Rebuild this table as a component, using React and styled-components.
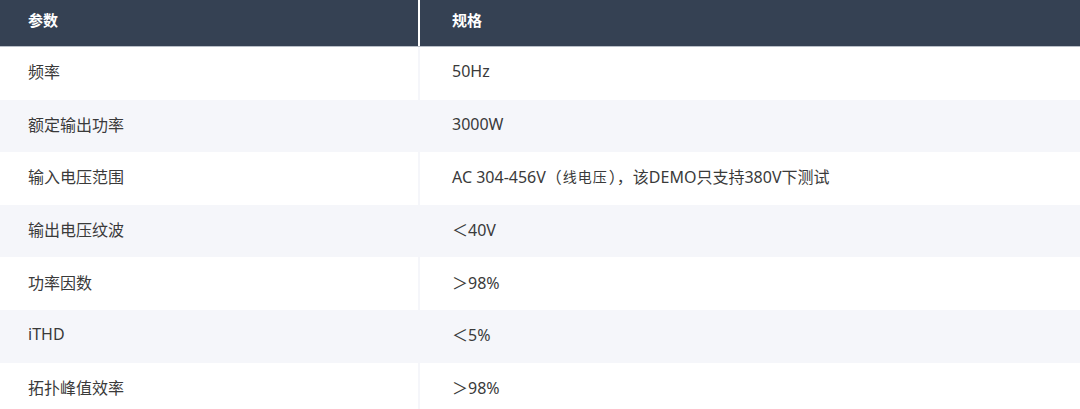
import React from "react";
import styled, { createGlobalStyle } from "styled-components";

const GlobalStyle = createGlobalStyle`
  body {
    margin: 0;
    background: #ffffff;
    font-family: "Noto Sans", "Noto Sans CJK SC", sans-serif;
  }
`;

const Table = styled.div`
  width: 1080px;
  display: flex;
  flex-direction: column;
`;

const HeadRow = styled.div`
  display: grid;
  grid-template-columns: 418px 1fr;
  column-gap: 2px;
  background: #ffffff;
  height: 46px;
  border-bottom: 1px solid #b9bfc8;
`;

const HeadCell = styled.div`
  display: flex;
  align-items: center;
  background: #354153;
  color: #ffffff;
  font-weight: 700;
  font-size: 15px;
  padding-bottom: 7px;
  padding-left: ${(props) => (props.$second ? "32px" : "28px")};
`;

const Row = styled.div`
  display: grid;
  grid-template-columns: 418px 2px 1fr;
  height: 52.6px;
  background: ${(props) => (props.$striped ? "#f5f6fa" : "#ffffff")};
`;

const Divider = styled.div`
  background: #f5f6fa;
`;

const Cell = styled.div`
  display: flex;
  align-items: center;
  color: #3a3a3a;
  font-size: 16px;
  padding-bottom: 4px;
  padding-left: ${(props) => (props.$second ? "32px" : "28px")};
`;

const Note = styled.span`
  font-size: 14px;
  letter-spacing: 1px;
  margin: 0 1px;
`;

const rows = [
  ["频率", "50Hz"],
  ["额定输出功率", "3000W"],
  [
    "输入电压范围",
    <>
      AC 304-456V（<Note>线电压</Note>），该DEMO只支持380V下测试
    </>,
  ],
  ["输出电压纹波", "＜40V"],
  ["功率因数", "＞98%"],
  ["iTHD", "＜5%"],
  ["拓扑峰值效率", "＞98%"],
];

function App() {
  return (
    <>
      <GlobalStyle />
      <Table>
        <HeadRow>
          <HeadCell>参数</HeadCell>
          <HeadCell $second>规格</HeadCell>
        </HeadRow>
        {rows.map(([name, value], i) => (
          <Row key={i} $striped={i % 2 === 1}>
            <Cell>{name}</Cell>
            <Divider />
            <Cell $second>{value}</Cell>
          </Row>
        ))}
      </Table>
    </>
  );
}

export default App;
